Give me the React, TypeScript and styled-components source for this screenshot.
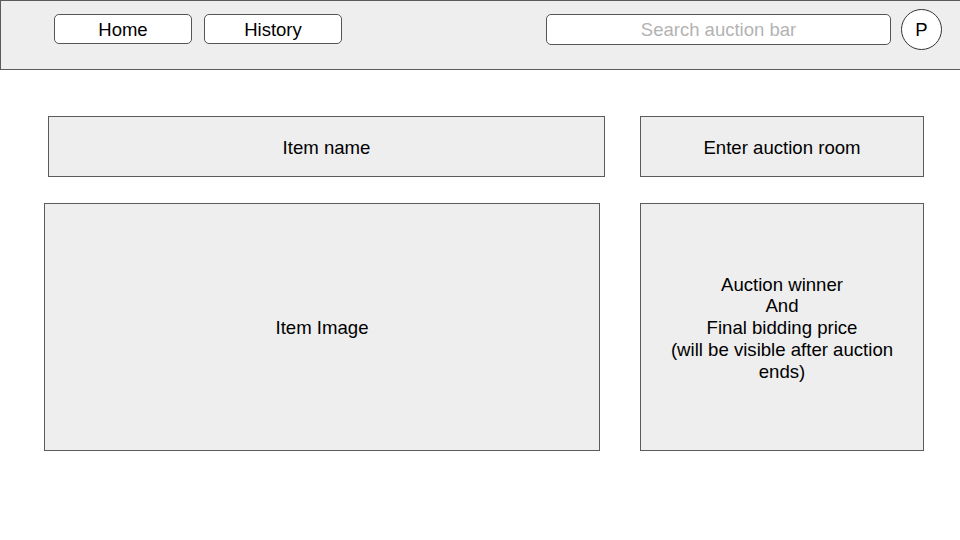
import React from 'react'
import styled, {createGlobalStyle} from 'styled-components'

const GlobalStyle = createGlobalStyle`
  html, body {
    margin: 0;
    padding: 0;
    background: #ffffff;
  }
  body {
    font-family: 'Liberation Sans', Arial, sans-serif;
    color: #000000;
  }
`

const Page = styled.div`
  width: 960px;
  height: 540px;
  overflow: hidden;
  background: #ffffff;
`

const TopBar = styled.header`
  display: flex;
  align-items: flex-start;
  box-sizing: border-box;
  width: 961px;
  height: 70px;
  padding: 13px 0 0 53px;
  background: #eeeeee;
  border: 1px solid #5b5b5b;
`

const NavButton = styled.button`
  box-sizing: border-box;
  width: 138px;
  height: 30px;
  margin-right: 12px;
  padding: 2px 0 0;
  background: #ffffff;
  border: 1px solid #555555;
  border-radius: 5px;
  font-family: 'Liberation Sans', Arial, sans-serif;
  font-size: 18.5px;
  color: #000000;
`

const SearchBox = styled.div`
  box-sizing: border-box;
  display: flex;
  align-items: center;
  justify-content: center;
  width: 345px;
  height: 31px;
  margin-left: 192px;
  background: #ffffff;
  border: 1px solid #555555;
  border-radius: 5px;
  font-size: 18.5px;
  color: #b3b3b3;
`

const Avatar = styled.div`
  box-sizing: border-box;
  display: flex;
  align-items: center;
  justify-content: center;
  width: 41px;
  height: 41px;
  margin: -5px 0 0 10px;
  background: #ffffff;
  border: 1px solid #333333;
  border-radius: 50%;
  font-size: 18.5px;
`

const Content = styled.main`
  display: flex;
  flex-direction: column;
  gap: 26px;
  padding-top: 46px;
`

const Row = styled.div<{$left: number; $gap: number}>`
  display: flex;
  padding-left: ${p => p.$left}px;
  gap: ${p => p.$gap}px;
`

const Panel = styled.div<{$w: number; $h: number}>`
  box-sizing: border-box;
  display: flex;
  align-items: center;
  justify-content: center;
  width: ${p => p.$w}px;
  height: ${p => p.$h}px;
  padding: 2px 26px 0;
  background: #eeeeee;
  border: 1px solid #5b5b5b;
  font-size: 18.6px;
  line-height: 21.8px;
  text-align: center;
`

export default function App() {
  return (
    <Page>
      <GlobalStyle />
      <TopBar>
        <NavButton>Home</NavButton>
        <NavButton>History</NavButton>
        <SearchBox>Search auction bar</SearchBox>
        <Avatar>P</Avatar>
      </TopBar>
      <Content>
        <Row $left={48} $gap={35}>
          <Panel $w={557} $h={61}>Item name</Panel>
          <Panel $w={284} $h={61}>Enter auction room</Panel>
        </Row>
        <Row $left={44} $gap={40}>
          <Panel $w={556} $h={248}>Item Image</Panel>
          <Panel $w={284} $h={248}>
            Auction winner
            <br />
            And
            <br />
            Final bidding price
            <br />
            (will be visible after auction ends)
          </Panel>
        </Row>
      </Content>
    </Page>
  )
}
